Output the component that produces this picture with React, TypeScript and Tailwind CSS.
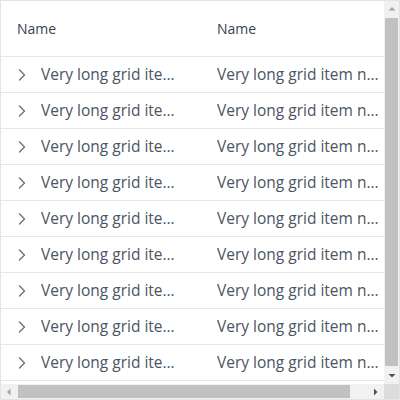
import React from "react";

const rows = Array.from({ length: 10 }, (_, i) => i);

function Chevron() {
  return (
    <svg width="10" height="14" viewBox="0 0 10 14" className="shrink-0">
      <path d="M2.5 2 L7.5 7 L2.5 12" fill="none" stroke="#6b7280" strokeWidth="1.4" strokeLinecap="round" strokeLinejoin="round" />
    </svg>
  );
}

function Tri({ dir, color }: { dir: "up" | "down" | "left" | "right"; color: string }) {
  const pts =
    dir === "up"
      ? "0.5,4.5 4,1 7.5,4.5"
      : dir === "down"
      ? "0.5,1 7.5,1 4,4.5"
      : dir === "left"
      ? "4.5,0.5 4.5,7.5 1,4"
      : "1,0.5 1,7.5 4.5,4";
  const w = dir === "up" || dir === "down" ? 8 : 6;
  const h = dir === "up" || dir === "down" ? 6 : 8;
  return (
    <svg width={w} height={h} viewBox={`0 0 ${w} ${h}`}>
      <polygon points={pts} fill={color} />
    </svg>
  );
}

export default function App() {
  return (
    <div
      className="w-[400px] h-[400px] border border-[#e2e4e8] bg-white flex flex-col"
      style={{ fontFamily: '"Open Sans", "Noto Sans", sans-serif' }}
    >
      <div className="flex h-[383px]">
        <div className="w-[383px] h-[383px] overflow-hidden">
          <div className="w-[408px]">
            <div className="flex h-[56px] border-b border-[#e5e7eb] items-center">
              <div className="w-[200px] shrink-0 px-4 text-[14px] font-medium text-[#374151]">Name</div>
              <div className="w-[200px] shrink-0 px-4 text-[14px] font-medium text-[#374151]">Name</div>
            </div>
            {rows.map((i) => (
              <div key={i} className="flex h-[36px] border-b border-[#e5e7eb] items-center">
                <div className="w-[200px] shrink-0 pl-4 pr-[18px] flex items-center gap-[14px] min-w-0">
                  <Chevron />
                  <span className="truncate text-[15.5px] text-[#4b5563]">Very long grid item name {i + 1}</span>
                </div>
                <div className="w-[200px] shrink-0 pl-4 pr-[18px] min-w-0">
                  <div className="truncate text-[15.5px] text-[#4b5563]">Very long grid item name {i + 1}</div>
                </div>
              </div>
            ))}
          </div>
        </div>
        <div className="w-[15px] h-[383px] bg-[#f1f1f1] flex flex-col">
          <div className="h-[16px] flex items-center justify-center">
            <Tri dir="up" color="#a3a3a3" />
          </div>
          <div className="flex-1 px-[1px] pt-[1px] pb-[1px]">
            <div className="h-[348px] bg-[#c1c1c1]" />
          </div>
          <div className="h-[16px] flex items-center justify-center">
            <Tri dir="down" color="#505050" />
          </div>
        </div>
      </div>
      <div className="flex h-[15px]">
        <div className="w-[383px] bg-[#f1f1f1] flex">
          <div className="w-[16px] flex items-center justify-center">
            <Tri dir="left" color="#a3a3a3" />
          </div>
          <div className="flex-1 py-[1px] pl-[1px]">
            <div className="w-[332px] h-full bg-[#c1c1c1]" />
          </div>
          <div className="w-[16px] flex items-center justify-center">
            <Tri dir="right" color="#505050" />
          </div>
        </div>
        <div className="w-[15px] bg-[#dcdcdc]" />
      </div>
    </div>
  );
}
